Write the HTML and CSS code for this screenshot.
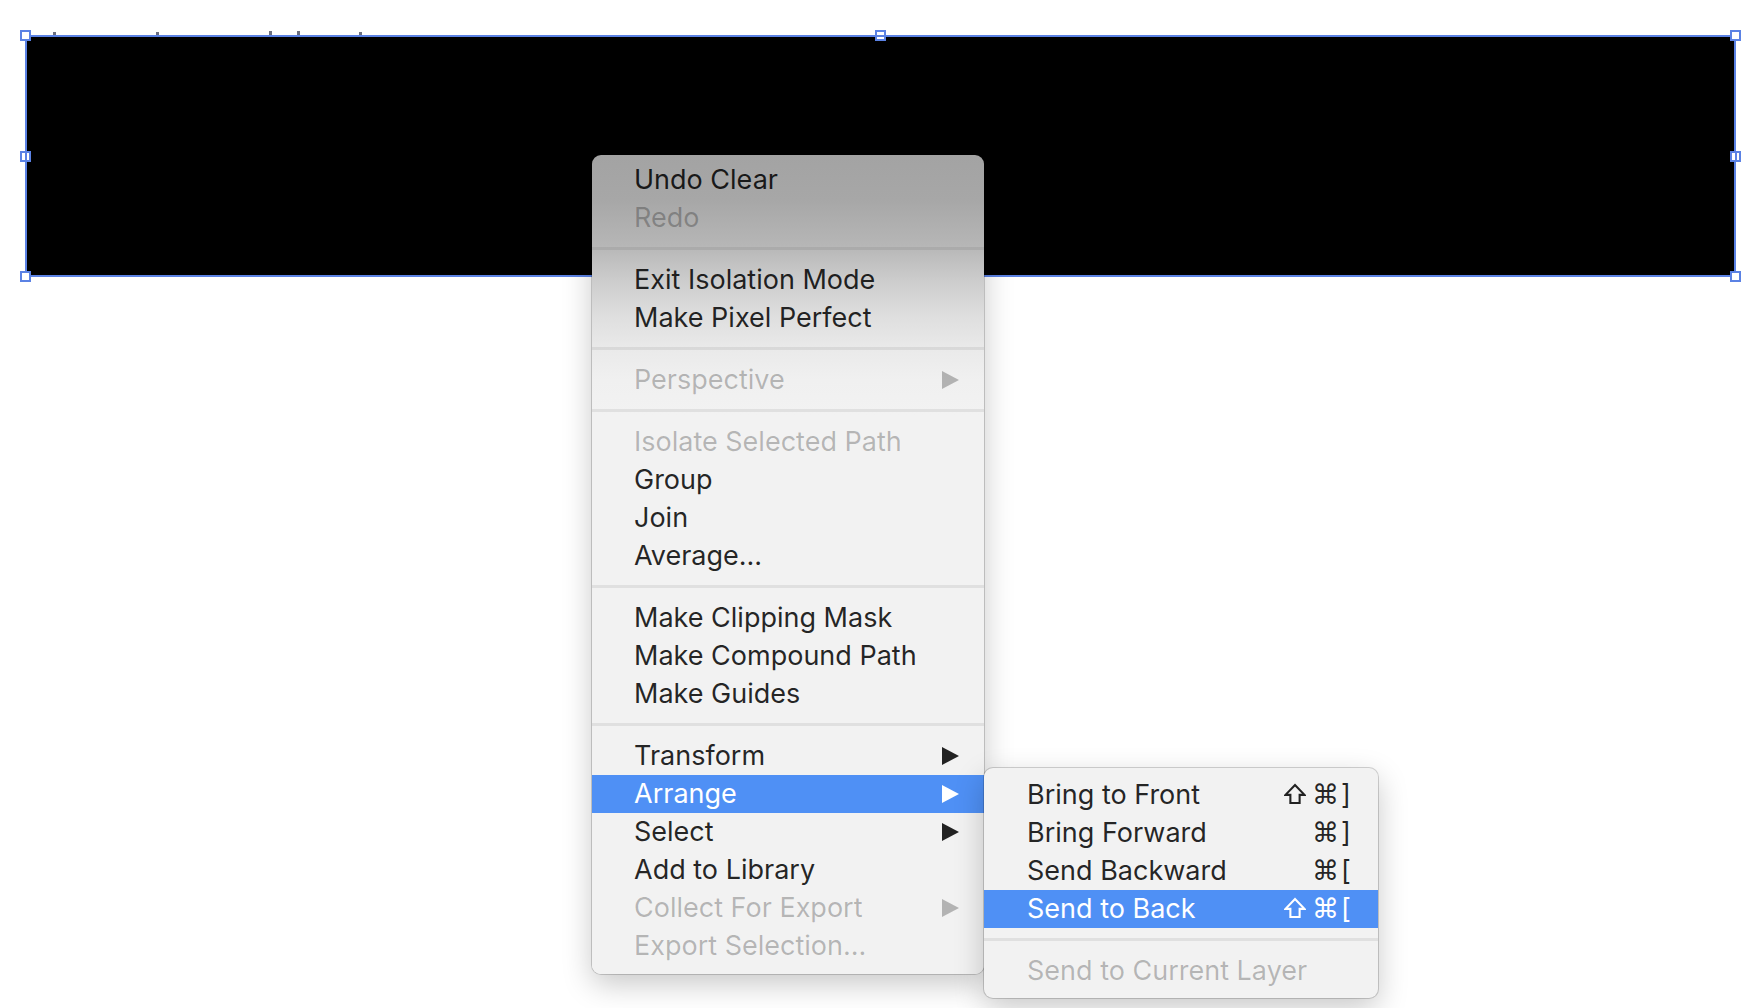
FILE: index.html
```html
<!DOCTYPE html>
<html>
<head>
<meta charset="utf-8">
<title>Context menu</title>
<link rel="stylesheet" href="styles.css">
</head>
<body>
<div class="canvas">
  <div class="ticks">
    <span class="tick t1"></span>
    <span class="tick t2"></span>
    <span class="tick t3"></span>
    <span class="tick t4"></span>
    <span class="tick t5"></span>
  </div>
  <div class="art">
    <span class="handle h-tl"></span>
    <span class="handle h-tm mid-h"></span>
    <span class="handle h-tr"></span>
    <span class="handle h-ml mid-v"></span>
    <span class="handle h-mr mid-v"></span>
    <span class="handle h-bl"></span>
    <span class="handle h-bm mid-h"></span>
    <span class="handle h-br"></span>
  </div>

  <div class="menu main-menu">
    <div class="item">Undo Clear</div>
    <div class="item disabled">Redo</div>
    <div class="sep"></div>
    <div class="item">Exit Isolation Mode</div>
    <div class="item">Make Pixel Perfect</div>
    <div class="sep"></div>
    <div class="item disabled">Perspective<span class="arrow"></span></div>
    <div class="sep"></div>
    <div class="item disabled">Isolate Selected Path</div>
    <div class="item">Group</div>
    <div class="item">Join</div>
    <div class="item">Average...</div>
    <div class="sep"></div>
    <div class="item">Make Clipping Mask</div>
    <div class="item">Make Compound Path</div>
    <div class="item">Make Guides</div>
    <div class="sep"></div>
    <div class="item">Transform<span class="arrow"></span></div>
    <div class="item active">Arrange<span class="arrow"></span></div>
    <div class="item">Select<span class="arrow"></span></div>
    <div class="item">Add to Library</div>
    <div class="item disabled">Collect For Export<span class="arrow"></span></div>
    <div class="item disabled">Export Selection...</div>
  </div>

  <div class="menu sub-menu">
    <div class="item">Bring to Front<span class="keys"><svg class="k-shift" viewBox="0 0 20 20"><path d="M10 1.8 L18.6 10.8 H14.2 V18.2 H5.8 V10.8 H1.4 Z"/></svg><span class="k-cmd">⌘</span><span class="k-key">]</span></span></div>
    <div class="item">Bring Forward<span class="keys"><span class="k-blank"></span><span class="k-cmd">⌘</span><span class="k-key">]</span></span></div>
    <div class="item">Send Backward<span class="keys"><span class="k-blank"></span><span class="k-cmd">⌘</span><span class="k-key">[</span></span></div>
    <div class="item active">Send to Back<span class="keys"><svg class="k-shift" viewBox="0 0 20 20"><path d="M10 1.8 L18.6 10.8 H14.2 V18.2 H5.8 V10.8 H1.4 Z"/></svg><span class="k-cmd">⌘</span><span class="k-key">[</span></span></div>
    <div class="sep"></div>
    <div class="item disabled">Send to Current Layer</div>
  </div>
</div>
</body>
</html>
```

FILE: styles.css
```css
html, body {
  margin: 0;
  padding: 0;
  background: #ffffff;
}

.canvas {
  position: relative;
  width: 1760px;
  height: 1008px;
  overflow: hidden;
  background: #ffffff;
  font-family: Inter, "Noto Sans", "DejaVu Sans", sans-serif;
}

/* tiny marks peeking above the artwork */
.tick {
  position: absolute;
  top: 32px;
  width: 3px;
  height: 3px;
  background: #6b6f80;
}
.t1 { left: 53px; }
.t2 { left: 156px; }
.t3 { left: 269px; height: 4px; top: 31px; }
.t4 { left: 297px; height: 4px; top: 31px; }
.t5 { left: 359px; }

/* selected artwork rectangle */
.art {
  position: absolute;
  left: 25px;
  top: 35px;
  width: 1711px;
  height: 242px;
  box-sizing: border-box;
  background: #000000;
  border: 2px solid #5b82e4;
}

.handle {
  position: absolute;
  width: 11px;
  height: 11px;
  box-sizing: border-box;
  border: 2px solid #5b82e4;
  background: #ffffff;
}
.h-tl { left: -7px; top: -7px; }
.h-tm { left: calc(50% - 5.5px); top: -7px; }
.h-tr { right: -7px; top: -7px; }
.h-ml { left: -7px; top: calc(50% - 5.5px); }
.h-mr { right: -7px; top: calc(50% - 5.5px); }
.h-bl { left: -7px; bottom: -7px; }
.h-bm { left: calc(50% - 5.5px); bottom: -7px; }
.h-br { right: -7px; bottom: -7px; }

.mid-h::after {
  content: "";
  position: absolute;
  left: 0;
  right: 0;
  top: 2.5px;
  height: 2px;
  background: #5b82e4;
}
.mid-v::after {
  content: "";
  position: absolute;
  top: 0;
  bottom: 0;
  left: 2.5px;
  width: 2px;
  background: #5b82e4;
}

/* menus */
.menu {
  position: absolute;
  box-sizing: border-box;
  border-radius: 9px;
  overflow: hidden;
  background: #f2f2f2;
  box-shadow: 0 0 0 1px rgba(0, 0, 0, 0.17), 0 10px 30px rgba(0, 0, 0, 0.22);
}

.main-menu {
  left: 592px;
  top: 155px;
  width: 392px;
  padding: 6px 0 9px;
  background: linear-gradient(180deg,
    #a3a3a3 0px,
    #a7a7a7 45px,
    #b6b6b6 90px,
    #cccccc 125px,
    #dedede 160px,
    #eaeaea 195px,
    #f0f0f0 225px,
    #f2f2f2 260px);
  z-index: 2;
}

.sub-menu {
  left: 984px;
  top: 768px;
  width: 394px;
  padding: 8px 0 8px;
  z-index: 3;
}

.item {
  display: flex;
  align-items: center;
  box-sizing: border-box;
  height: 38px;
  padding: 0 25px 2px 42px;
  font-size: 27px;
  font-weight: 400;
  letter-spacing: 0;
  color: rgba(0, 0, 0, 0.86);
  white-space: nowrap;
}

.sub-menu .item {
  padding: 0 29px 2px 43px;
}

.item.disabled {
  color: rgba(0, 0, 0, 0.26);
}

.item.active {
  background: #4f90f5;
  color: #ffffff;
}

.sep {
  height: 3px;
  margin: 10px 0 11px;
  background: rgba(0, 0, 0, 0.07);
}

.arrow {
  margin-left: auto;
  margin-top: 2px;
  width: 0;
  height: 0;
  border-top: 9px solid transparent;
  border-bottom: 9px solid transparent;
  border-left: 17px solid currentColor;
}

.keys {
  margin-left: auto;
  display: flex;
  align-items: center;
  letter-spacing: 0;
}

.k-shift {
  width: 22px;
  height: 22px;
  margin-right: 6px;
  fill: none;
  stroke: currentColor;
  stroke-width: 1.9;
  stroke-linejoin: miter;
}
.k-blank {
  width: 22px;
  height: 22px;
  margin-right: 6px;
}
.k-cmd {
  width: 25px;
  font-family: "DejaVu Sans", sans-serif;
  font-size: 27px;
  line-height: 1;
  text-align: center;
}
.k-key {
  width: 8px;
  margin-left: 4px;
  text-align: left;
}
```
